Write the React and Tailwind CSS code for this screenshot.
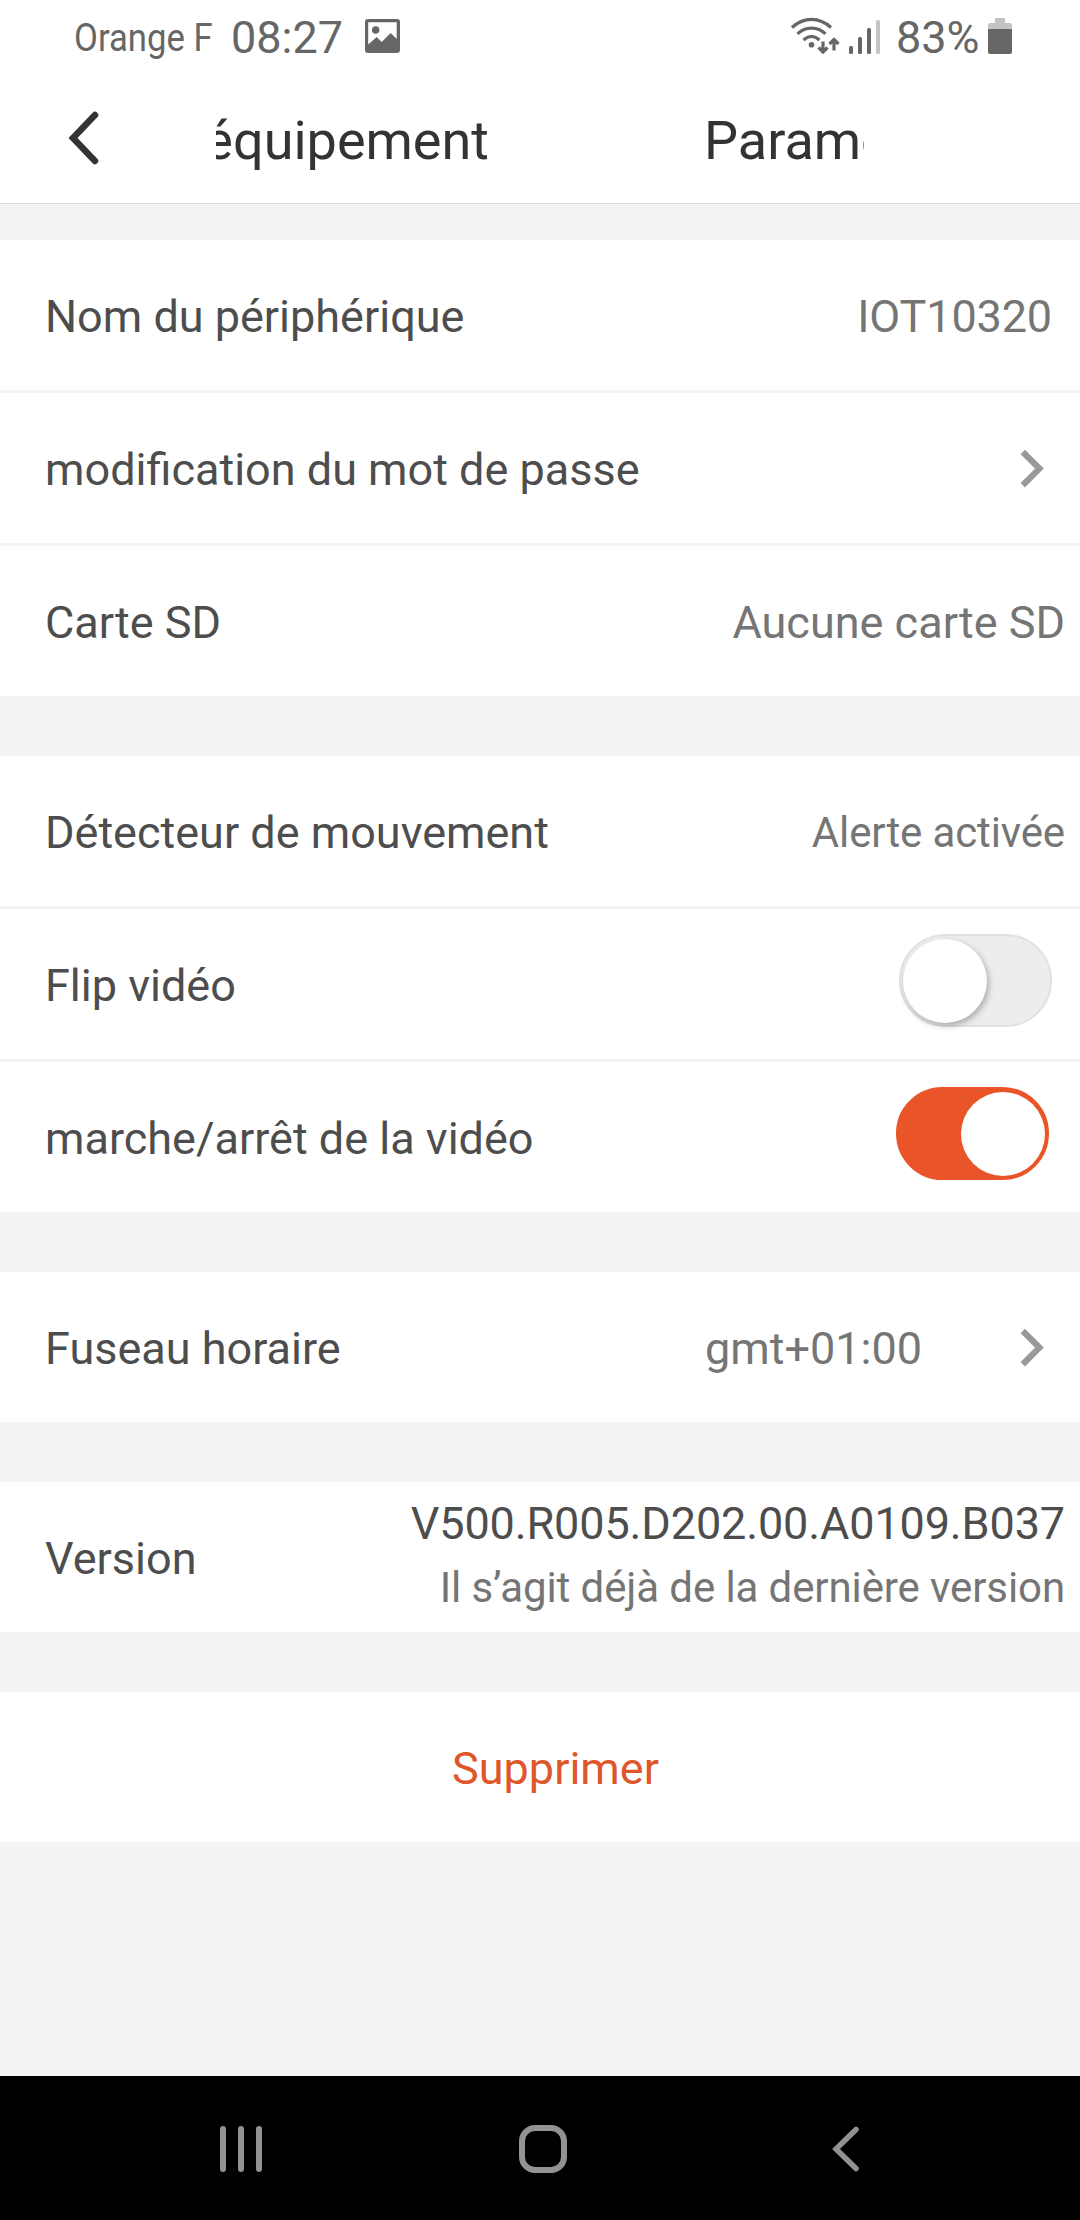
import { useState } from 'react';

function StatusBar() {
  return (
    <div className="flex h-[76px] items-start bg-white text-[#666666]">
      <span className="ml-[74px] mt-[15px] w-[160px] origin-left scale-x-[0.89] whitespace-nowrap text-[39px] leading-[46px]">Orange F</span>
      <span className="-ml-[3px] mt-[11px] w-[134px] whitespace-nowrap text-[45px] leading-[54px]">08:27</span>
      <svg className="mt-[19px] h-[34px] w-[35px]" viewBox="0 0 35 34" fill="#666666">
        <path
          fillRule="evenodd"
          d="M3 0h29a3 3 0 0 1 3 3v28a3 3 0 0 1-3 3H3a3 3 0 0 1-3-3V3a3 3 0 0 1 3-3zM3.200 3.300V25.500l8.500-7.500 5 5 9-9 6 6V3.300z"
        />
        <circle cx="10.700" cy="11" r="3.700" />
      </svg>
      <svg className="ml-[391px] mt-[17px] h-[39px] w-[50px]" viewBox="0 0 50 39" fill="none" stroke="#666666" strokeWidth="3.200">
        <path d="M1 10.500C13-.3 28-.3 40 10.500M6.500 16.800c8-7.500 20-7.500 28 0M12.500 23c5-4.500 11-4.500 16 0" />
        <circle cx="20.500" cy="27.700" r="2.800" fill="#666666" stroke="none" />
        <path d="M32 24.500V35M27.500 30.500 32 35l4.500-4.500M43 33.500V23M38.500 27l4.500-4.500 4.500 4.500" />
      </svg>
      <svg className="ml-[8px] mt-[18px] h-[36px] w-[31px]" viewBox="0 0 31 36" fill="#666666">
        <rect x="0" y="28" width="4" height="8" rx="1.500" />
        <rect x="9" y="19" width="4" height="17" rx="1.500" />
        <rect x="18" y="10" width="4" height="26" rx="1.500" />
        <rect x="27" y="2" width="4" height="34" rx="1.500" fill="#c4c4c4" />
      </svg>
      <span className="ml-[16px] mt-[11px] w-[92px] whitespace-nowrap text-[45px] leading-[54px]">83%</span>
      <svg className="mt-[18px] h-[36px] w-[24px]" viewBox="0 0 24 36">
        <path d="M7 0h10v5h5a2 2 0 0 1 2 2v4H0V7a2 2 0 0 1 2-2h5z" fill="#c4c4c4" />
        <path d="M0 11h24v23a2 2 0 0 1-2 2H2a2 2 0 0 1-2-2z" fill="#666666" />
      </svg>
    </div>
  );
}

function Header() {
  return (
    <header className="flex h-32 border-b border-[#dcdcdc] bg-white">
      <button className="ml-[68px] mt-[34px] h-[56px] w-[31px]" aria-label="Retour">
        <svg className="h-[56px] w-[31px]" viewBox="0 0 31 56" fill="none" stroke="#333333" strokeWidth="6.500" strokeLinecap="round">
          <path d="M27 5 5 28l22 23" />
        </svg>
      </button>
      {/* scrolling title, cut off on both sides */}
      <div className="ml-[117px] mt-[33px] flex h-[64px] w-[648px] overflow-hidden whitespace-nowrap text-[54px] leading-[64px] text-[#333333]">
        <span className="flex w-[273px] shrink-0 justify-end">équipement</span>
        <span className="ml-[215px] shrink-0">Paramè</span>
      </div>
    </header>
  );
}

function Chevron() {
  return (
    <svg className="mr-[36px] h-[40px] w-[24px]" viewBox="0 0 24 40" fill="none" stroke="#999999" strokeWidth="6.200">
      <path d="M2.800 4 19.400 20.600 2.800 37.200" />
    </svg>
  );
}

function Row({ label, children }) {
  return (
    <div className="flex h-[150px] items-center justify-between bg-white pl-[45px]">
      <span className="pt-[3px] text-[45px] text-[#4d4d4d]">{label}</span>
      {children}
    </div>
  );
}

function Group({ children }) {
  return <section className="flex flex-col gap-[3px]">{children}</section>;
}

function Toggle({ on, onClick }) {
  return (
    <button
      onClick={onClick}
      className={`mb-[7px] flex h-[93px] w-[153px] items-center rounded-full border-2 ${
        on
          ? 'mr-[31px] justify-end border-[#e95528] bg-[#e95528] pr-[2px]'
          : 'mr-[28px] border-[#e2e2e2] bg-[#ededed] pl-[2px]'
      }`}
    >
      <span className={`h-[84px] w-[84px] rounded-full bg-white ${on ? '' : 'shadow-[2px_3px_6px_rgba(0,0,0,0.28)]'}`} />
    </button>
  );
}

function NavBar() {
  return (
    <nav className="flex h-36 items-center bg-black pt-[2px]">
      <svg className="ml-[219px] h-[64px] w-[44px]" viewBox="0 0 44 64" fill="none" stroke="#929292" strokeWidth="6" strokeLinecap="round">
        <path d="M4 12v40M22 12v40M40 12v40" />
      </svg>
      <svg className="ml-[256px] h-[50px] w-[48px]" viewBox="0 0 48 50" fill="none" stroke="#929292" strokeWidth="6">
        <rect x="3" y="4" width="42" height="42" rx="13" />
      </svg>
      <svg className="ml-[264px] h-[50px] w-[30px]" viewBox="0 0 30 50" fill="none" stroke="#929292" strokeWidth="5.500" strokeLinecap="round">
        <path d="M25 5.500 5 25l20 19.500" />
      </svg>
    </nav>
  );
}

export default function App() {
  const [flip, setFlip] = useState(false);
  const [video, setVideo] = useState(true);

  return (
    <div className="flex h-[2220px] w-[1080px] flex-col overflow-hidden bg-[#f3f3f3] font-['Roboto',sans-serif]">
      <StatusBar />
      <Header />

      <main className="mt-9 flex flex-1 flex-col gap-[60px]">
        <Group>
          <Row label="Nom du périphérique">
            <span className="mr-[28px] pt-[3px] text-[45px] tracking-[-0.15px] text-[#757575]">IOT10320</span>
          </Row>
          <Row label="modification du mot de passe">
            <Chevron />
          </Row>
          <Row label="Carte SD">
            <span className="mr-[15px] pt-[3px] text-[45px] text-[#757575]">Aucune carte SD</span>
          </Row>
        </Group>

        <Group>
          <Row label="Détecteur de mouvement">
            <span className="mr-[15px] pt-[3px] text-[42px] tracking-[-0.13px] text-[#757575]">Alerte activée</span>
          </Row>
          <Row label="Flip vidéo">
            <Toggle on={flip} onClick={() => setFlip(!flip)} />
          </Row>
          <Row label="marche/arrêt de la vidéo">
            <Toggle on={video} onClick={() => setVideo(!video)} />
          </Row>
        </Group>

        <Group>
          <Row label="Fuseau horaire">
            <div className="flex items-center">
              <span className="mr-[98px] pt-[3px] text-[45px] text-[#757575]">gmt+01:00</span>
              <Chevron />
            </div>
          </Row>
        </Group>

        <Group>
          <Row label="Version">
            <div className="mb-[2px] mr-[15px] flex flex-col items-end">
              <span className="text-[45px] leading-[64px] tracking-[-0.13px] text-[#4d4d4d]">V500.R005.D202.00.A0109.B037</span>
              <span className="text-[42px] leading-[64px] tracking-[-0.1px] text-[#757575]">Il s’agit déjà de la dernière version</span>
            </div>
          </Row>
        </Group>

        <button className="h-[150px] bg-white pl-[31px] pt-[3px] text-[45px] text-[#e0562b]">Supprimer</button>
      </main>

      <NavBar />
    </div>
  );
}
